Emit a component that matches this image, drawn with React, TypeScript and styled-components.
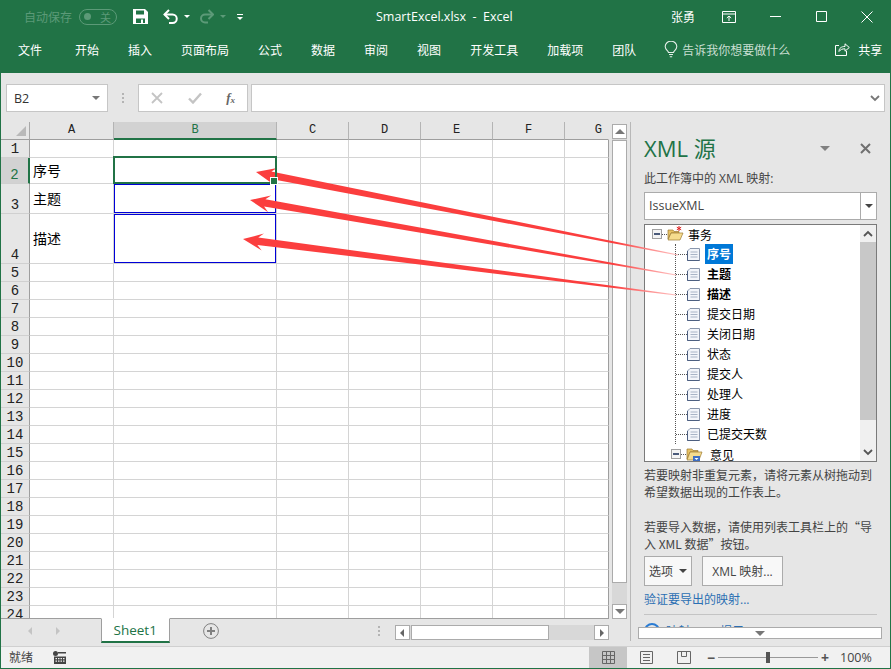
import React from 'react';
import styled, { createGlobalStyle } from 'styled-components';

const GREEN = '#217346';
const CJK = '"Noto Sans CJK SC", sans-serif';
const UI = '"Open Sans", "Noto Sans CJK SC", sans-serif';

const GlobalStyle = createGlobalStyle`
  html, body {
    margin: 0;
    padding: 0;
    background: #e6e6e6;
  }
  * {
    box-sizing: border-box;
  }
`;

const TABS = ['文件', '开始', '插入', '页面布局', '公式', '数据', '审阅', '视图', '开发工具', '加载项', '团队'];
const COLUMNS = ['A', 'B', 'C', 'D', 'E', 'F', 'G'];
const FIELDS = ['序号', '主题', '描述', '提交日期', '关闭日期', '状态', '提交人', '处理人', '进度', '已提交天数'];
const ROW_HEIGHTS = [18, 26, 30, 50];
const ROWS = Array.from({ length: 24 }, (_, i) => ({ id: i + 1, height: ROW_HEIGHTS[i] ?? 18 }));

const ARROWS = [
  { tip: [256, 172], tail: [678, 255] },
  { tip: [250, 200], tail: [676, 275] },
  { tip: [243, 239], tail: [676, 295] },
];

// tapered arrow: wide at the head, a hair at the tail
const arrowPoints = (tip: number[], tail: number[]) => {
  const len = Math.hypot(tail[0] - tip[0], tail[1] - tip[1]);
  const dx = (tail[0] - tip[0]) / len;
  const dy = (tail[1] - tip[1]) / len;
  const at = (along: number, side: number) =>
    `${(tip[0] + dx * along - dy * side).toFixed(1)},${(tip[1] + dy * along + dx * side).toFixed(1)}`;
  return [
    at(0, 0),
    at(20, -8),
    at(15, -3.5),
    at(len, -0.5),
    at(len, 0.5),
    at(15, 4),
    at(20, 9),
  ].join(' ');
};

const App: React.FC = () => {
  return (
    <Window>
      <GlobalStyle />
      <TitleBar>
        <AutoSave>自动保存</AutoSave>
        <Toggle>
          <ToggleDot />
          <ToggleText>关</ToggleText>
        </Toggle>
        <QuickIcon $left={16}>
          <svg width="15" height="15" viewBox="0 0 15 15">
            <path d="M0 0h12l3 3v12H0z" fill="#fff" />
            <path d="M3 1.5h8v4H3z" fill={GREEN} />
            <path d="M3 9.5h9V14H3z" fill={GREEN} />
            <path d="M8 10.5h2V14H8z" fill="#fff" />
          </svg>
        </QuickIcon>
        <QuickIcon $left={15}>
          <svg width="16" height="15" viewBox="0 0 16 15" fill="none" stroke="#fff" strokeWidth="2">
            <path d="M1.5 5.5h8a4.2 4.2 0 0 1 0 8.5H6" />
            <path d="M6 1 1.5 5.5 6 10" />
          </svg>
        </QuickIcon>
        <QuickCaret $left={5} />
        <QuickIcon $left={10}>
          <svg width="14" height="15" viewBox="0 0 14 15" fill="none" stroke="#5c9a78" strokeWidth="2">
            <path d="M13 5.5H5a3.8 3.8 0 0 0 0 8h3" />
            <path d="M8.5 1 13 5.5 8.5 10" />
          </svg>
        </QuickIcon>
        <QuickCaret $left={6} $dim />
        <Customize />
        <DocTitle>SmartExcel.xlsx&nbsp;&nbsp;-&nbsp;&nbsp;Excel</DocTitle>
        <UserName>张勇</UserName>
        <WinButton>
          <svg width="14" height="12" viewBox="0 0 14 12" fill="none" stroke="#fff">
            <path d="M.5 .5h13v11H.5zM.5 3h13M7 10V5M4.8 7 7 5l2.2 2" />
          </svg>
        </WinButton>
        <WinButton>
          <svg width="11" height="11" viewBox="0 0 11 11" stroke="#fff">
            <path d="M0 5.5h11" />
          </svg>
        </WinButton>
        <WinButton>
          <svg width="11" height="11" viewBox="0 0 11 11" fill="none" stroke="#fff">
            <path d="M.5 .5h10v10H.5z" />
          </svg>
        </WinButton>
        <WinButton>
          <svg width="12" height="12" viewBox="0 0 12 12" stroke="#fff">
            <path d="M.5 .5l11 11M11.5 .5l-11 11" />
          </svg>
        </WinButton>
      </TitleBar>

      <TabBar>
        {TABS.map((tab, i) => (
          <Tab key={tab} $first={i === 0}>
            {tab}
          </Tab>
        ))}
        <TellMe>
          <svg width="14" height="17" viewBox="0 0 14 17" fill="none" stroke="#e4eee8" strokeWidth="1.1">
            <path d="M4.5 11.5C4 9.5 1.2 8.500 1.2 5.500a5.800 5.300 0 0 1 11.600 0c0 3-2.800 4-3.300 6z" />
            <path d="M5 13.500h4M5.800 15.800h2.400" />
          </svg>
          <span>告诉我你想要做什么</span>
        </TellMe>
        <Share>
          <svg width="15" height="14" viewBox="0 0 15 14" fill="none" stroke="#fff">
            <path d="M4 3.500H.5v10h11V9" />
            <path d="M4 9.500c0-3.500 2.500-5 6-5V1.800l4.300 3.700-4.300 3.700V6.800c-3 0-4.500.8-6 2.700z" />
          </svg>
          <span>共享</span>
        </Share>
      </TabBar>

      <FormulaRow>
        <NameBox>
          <span>B2</span>
          <Caret $size={4} $color="#777" />
        </NameBox>
        <Grip />
        <FormulaButtons>
          <svg width="12" height="12" viewBox="0 0 12 12" stroke="#c4c4c4" strokeWidth="1.800">
            <path d="M1 1l10 10M11 1 1 11" />
          </svg>
          <svg width="14" height="12" viewBox="0 0 14 12" fill="none" stroke="#c4c4c4" strokeWidth="2.400">
            <path d="M1 6.500 5 10.500 13 1.500" />
          </svg>
          <FxLabel>
            f<sub>x</sub>
          </FxLabel>
        </FormulaButtons>
        <FormulaInput>
          <svg width="10" height="7" viewBox="0 0 10 7" fill="none" stroke="#777" strokeWidth="1.800">
            <path d="M1 1l4 4 4-4" />
          </svg>
        </FormulaInput>
      </FormulaRow>

      <Body>
        <SheetArea>
          <SheetMain>
            <Grid>
              <Corner />
              {COLUMNS.map((col) => (
                <ColHeader key={col} $active={col === 'B'} $last={col === 'G'}>
                  {col}
                </ColHeader>
              ))}
              {ROWS.map((row) => (
                <React.Fragment key={row.id}>
                  <RowHeader $active={row.id === 2} style={{ height: row.height }}>
                    {row.id}
                  </RowHeader>
                  {COLUMNS.map((col) => (
                    <Cell key={col} $last={col === 'G'}>
                      {col === 'A' && row.id === 2 && '序号'}
                      {col === 'A' && row.id === 3 && '主题'}
                      {col === 'A' && row.id === 4 && '描述'}
                      {col === 'B' && row.id === 2 && <Selection />}
                      {col === 'B' && (row.id === 3 || row.id === 4) && <MappedCell />}
                    </Cell>
                  ))}
                </React.Fragment>
              ))}
            </Grid>
            <VScroll>
              <ScrollButton>
                <Caret $size={5} $up $color="#777" />
              </ScrollButton>
              <VThumb />
              <ScrollButton>
                <Caret $size={5} $color="#777" />
              </ScrollButton>
            </VScroll>
          </SheetMain>

          <SheetBar>
            <SheetNav>
              <NavArrow $left />
              <NavArrow />
            </SheetNav>
            <SheetTab>Sheet1</SheetTab>
            <AddSheet>
              <svg width="16" height="16" viewBox="0 0 16 16" fill="none" stroke="#808080">
                <circle cx="8" cy="8" r="7.400" />
                <path d="M8 4v8M4 8h8" strokeWidth="2" />
              </svg>
            </AddSheet>
            <BarGrip />
            <HScroll>
              <HButton>
                <NavArrow $left $dark />
              </HButton>
              <HThumb />
              <HTrack />
              <HButton>
                <NavArrow $dark />
              </HButton>
            </HScroll>
          </SheetBar>
        </SheetArea>

        <TaskPane>
          <PaneBody>
            <PaneHead>
              <PaneTitle>XML 源</PaneTitle>
              <Caret $size={5} $color="#808080" />
              <svg width="11" height="11" viewBox="0 0 11 11" stroke="#707070" strokeWidth="2">
                <path d="M1 1l9 9M10 1l-9 9" />
              </svg>
            </PaneHead>
            <PaneLabel>此工作簿中的 XML 映射:</PaneLabel>
            <MapSelect>
              <MapName>IssueXML</MapName>
              <MapDrop>
                <Caret $size={4} $color="#444" />
              </MapDrop>
            </MapSelect>
            <Tree>
              <TreeList>
                <FolderRow>
                  <Expander />
                  <Stub />
                  <svg width="17" height="16" viewBox="0 0 17 16">
                    <path d="M1 13V4h5l1 1.500h5V7H4z" fill="#e8c264" stroke="#9c7a30" strokeWidth=".7" />
                    <path d="M1 14 4 7h12l-3 7z" fill="#f6dc8e" stroke="#9c7a30" strokeWidth=".7" />
                    <path d="M12 0v5M9.800 1.200l4.400 2.600M14.200 1.200 9.800 3.800" stroke="#e02020" strokeWidth="1" />
                  </svg>
                  <FolderLabel>事务</FolderLabel>
                </FolderRow>
                <TreeChildren>
                  {FIELDS.map((field, i) => (
                    <FieldRow key={field}>
                      <Stub />
                      <svg width="13" height="13" viewBox="0 0 13 13">
                        <path d="M3 .5h9.500v12H.5V3z" fill="#f2f5fa" stroke="#8a97ad" />
                        <path d="M.5 3v9.500h12" fill="none" stroke="#4d5f80" />
                        <path d="M3.500 4h7M3.500 6.500h7M3.500 9h7" stroke="#a8b4c6" />
                      </svg>
                      <FieldLabel $bold={i < 3} $selected={i === 0}>
                        {field}
                      </FieldLabel>
                    </FieldRow>
                  ))}
                </TreeChildren>
                <FolderRow $nested>
                  <Expander />
                  <Stub />
                  <svg width="17" height="16" viewBox="0 0 17 16">
                    <path d="M1 13V3h5l1 1.500h5V6H4z" fill="#e8c264" stroke="#9c7a30" strokeWidth=".7" />
                    <path d="M1 14 4 6h12l-3 8z" fill="#f6dc8e" stroke="#9c7a30" strokeWidth=".7" />
                    <path d="M7 10h7v6H7z" fill="#3f6fc4" />
                    <path d="M8.500 12h4l-2 2z" fill="#fff" />
                  </svg>
                  <FolderLabel $wide>意见</FolderLabel>
                </FolderRow>
              </TreeList>
              <TreeScroll>
                <TreeChevron>
                  <svg width="10" height="7" viewBox="0 0 10 7" fill="none" stroke="#555" strokeWidth="1.800">
                    <path d="M1 6l4-4 4 4" />
                  </svg>
                </TreeChevron>
                <TreeThumb />
                <TreeChevron>
                  <svg width="10" height="7" viewBox="0 0 10 7" fill="none" stroke="#555" strokeWidth="1.800">
                    <path d="M1 1l4 4 4-4" />
                  </svg>
                </TreeChevron>
              </TreeScroll>
            </Tree>
            <Hint>若要映射非重复元素，请将元素从树拖动到希望数据出现的工作表上。</Hint>
            <Hint $gap>若要导入数据，请使用列表工具栏上的“导入 XML 数据”按钮。</Hint>
            <PaneButtons>
              <PaneButton>
                选项
                <Caret $size={4} $color="#444" />
              </PaneButton>
              <PaneButton $wide>XML 映射...</PaneButton>
            </PaneButtons>
            <PaneLink>验证要导出的映射...</PaneLink>
            <PaneDivider />
            <HelpRow>
              <svg width="16" height="16" viewBox="0 0 16 16" fill="none" stroke="#2b7cd3" strokeWidth="2">
                <circle cx="8" cy="8" r="7" />
              </svg>
              <HelpText>映射 XML 提示</HelpText>
            </HelpRow>
          </PaneBody>
          <PaneScroller>
            <Caret $size={5} $color="#777" />
          </PaneScroller>
        </TaskPane>
      </Body>

      <StatusBar>
        <StatusText>就绪</StatusText>
        <MacroIcon>
          <svg width="13" height="13" viewBox="0 0 13 13" fill="#444">
            <circle cx="2.500" cy="2.500" r="2.500" />
            <path d="M5 1h8v1.500H5zM1 5.500h12V13H1zM2.500 7v1.200h1.500V7zm2.500 0v1.200h1.500V7zm2.500 0v1.200H9V7zm2.500 0v1.200h1.500V7zM2.500 9.500v1.200h1.500V9.500zm2.500 0v1.200h1.500V9.500zm2.500 0v1.200H9V9.500zm2.500 0v1.200h1.500V9.500z" fillRule="evenodd" />
          </svg>
        </MacroIcon>
        <ViewButton $active>
          <svg width="13" height="13" viewBox="0 0 13 13" fill="none" stroke="#666">
            <path d="M.5 .5h12v12H.5zM4.500 .5v12M8.500 .5v12M.5 4.500h12M.5 8.500h12" />
          </svg>
        </ViewButton>
        <ViewButton>
          <svg width="13" height="13" viewBox="0 0 13 13" fill="none" stroke="#666">
            <path d="M.5 .5h12v12H.5zM3 3.500h7M3 6.500h7M3 9.500h7" />
          </svg>
        </ViewButton>
        <ViewButton>
          <svg width="14" height="13" viewBox="0 0 14 13" fill="none" stroke="#666">
            <path d="M.5 .5h13v12H.5zM4.500 .5v5h5v-5" />
          </svg>
        </ViewButton>
        <Zoom>
          <ZoomSign>−</ZoomSign>
          <ZoomTrack>
            <ZoomThumb />
          </ZoomTrack>
          <ZoomSign>+</ZoomSign>
          <ZoomValue>100%</ZoomValue>
        </Zoom>
      </StatusBar>

      <ArrowLayer width="891" height="669" viewBox="0 0 891 669">
        <defs>
          {ARROWS.map((a, i) => (
            <linearGradient
              key={i}
              id={`fade${i}`}
              gradientUnits="userSpaceOnUse"
              x1={a.tip[0]}
              y1={a.tip[1]}
              x2={a.tail[0]}
              y2={a.tail[1]}
            >
              <stop offset="0.85" stopColor="#fb3e3e" />
              <stop offset="1" stopColor="#ffc4c4" />
            </linearGradient>
          ))}
        </defs>
        {ARROWS.map((a, i) => (
          <polygon key={i} points={arrowPoints(a.tip, a.tail)} fill={`url(#fade${i})`} />
        ))}
      </ArrowLayer>
    </Window>
  );
};

const Window = styled.div`
  position: relative;
  display: flex;
  flex-direction: column;
  width: 891px;
  height: 669px;
  overflow: hidden;
  background: #e6e6e6;
  border: solid ${GREEN};
  border-width: 0 1px 1px 1px;
  font-family: ${UI};
`;

const TitleBar = styled.div`
  display: flex;
  align-items: center;
  height: 33px;
  margin: 0 -1px;
  padding-left: 24px;
  background: ${GREEN};
  color: #fff;
  flex-shrink: 0;
`;

const AutoSave = styled.span`
  font: 12px ${CJK};
  color: #5c9a78;
`;

const Toggle = styled.div`
  display: flex;
  align-items: center;
  justify-content: space-between;
  width: 38px;
  height: 16px;
  margin-left: 7px;
  padding: 0 5px 0 4px;
  border: 1px solid #5c9a78;
  border-radius: 8px;
`;

const ToggleDot = styled.span`
  width: 7px;
  height: 7px;
  border-radius: 50%;
  background: #5c9a78;
`;

const ToggleText = styled.span`
  font: 11px ${CJK};
  color: #5c9a78;
`;

const QuickIcon = styled.span<{ $left: number }>`
  display: flex;
  margin-left: ${(p) => p.$left}px;
`;

const QuickCaret = styled.span<{ $left: number; $dim?: boolean }>`
  width: 0;
  height: 0;
  margin-left: ${(p) => p.$left}px;
  border: 3px solid transparent;
  border-bottom-width: 0;
  border-top: 3px solid ${(p) => (p.$dim ? '#5c9a78' : '#fff')};
`;

const Customize = styled.span`
  position: relative;
  width: 6px;
  height: 6px;
  margin-left: 11px;
  border-top: 1px solid #fff;
  &::after {
    content: '';
    position: absolute;
    left: 0;
    top: 2px;
    border: 3px solid transparent;
    border-bottom-width: 0;
    border-top: 3px solid #fff;
  }
`;

const DocTitle = styled.span`
  position: absolute;
  left: 375px;
  top: 8px;
  font-size: 12.500px;
  line-height: 17px;
  white-space: nowrap;
`;

const UserName = styled.span`
  margin-left: auto;
  margin-right: 11px;
  font: 12px ${CJK};
`;

const WinButton = styled.span`
  display: flex;
  align-items: center;
  justify-content: center;
  width: 46px;
  height: 33px;
  &:last-child {
    margin-right: 1px;
  }
`;

const TabBar = styled.div`
  display: flex;
  align-items: center;
  gap: 29px;
  height: 40px;
  margin: 0 -1px;
  padding: 0 0 8px 18px;
  background: ${GREEN};
  flex-shrink: 0;
`;

const Tab = styled.span<{ $first?: boolean }>`
  margin-right: ${(p) => (p.$first ? 4 : 0)}px;
  font: 12px ${CJK};
  color: #fff;
`;

const TellMe = styled.span`
  display: flex;
  align-items: center;
  gap: 4px;
  margin-left: -1px;
  font: 12px ${CJK};
  color: #c9dfd2;
`;

const Share = styled.span`
  display: flex;
  align-items: center;
  gap: 8px;
  margin-left: 16px;
  font: 12px ${CJK};
  color: #fff;
`;

const FormulaRow = styled.div`
  display: flex;
  align-items: flex-start;
  height: 49px;
  padding: 11px 5px 0 5px;
  flex-shrink: 0;
`;

const FieldBox = styled.div`
  display: flex;
  align-items: center;
  height: 28px;
  background: #fff;
  border: 1px solid #c6c6c6;
`;

const NameBox = styled(FieldBox)`
  justify-content: space-between;
  width: 102px;
  padding: 0 7px;
  font-size: 12.500px;
  color: #333;
`;

const Grip = styled.span`
  width: 2px;
  height: 10px;
  margin: 9px 14px 0 14px;
  background: repeating-linear-gradient(#b4b4b4 0 2px, transparent 2px 4px);
`;

const FormulaButtons = styled(FieldBox)`
  justify-content: space-between;
  width: 110px;
  padding: 0 12px;
`;

const FxLabel = styled.span`
  font: italic bold 13px "Liberation Serif", serif;
  color: #666;
  sub {
    font-size: 9px;
    vertical-align: -1px;
  }
`;

const FormulaInput = styled(FieldBox)`
  justify-content: flex-end;
  width: 634px;
  margin-left: 3px;
  padding-right: 4px;
`;

const Caret = styled.span<{ $size: number; $color: string; $up?: boolean }>`
  display: inline-block;
  width: 0;
  height: 0;
  border-left: ${(p) => p.$size}px solid transparent;
  border-right: ${(p) => p.$size}px solid transparent;
  ${(p) =>
    p.$up
      ? `border-bottom: ${p.$size}px solid ${p.$color};`
      : `border-top: ${p.$size}px solid ${p.$color};`}
`;

const Body = styled.div`
  display: flex;
  height: 524px;
  flex-shrink: 0;
`;

const SheetArea = styled.div`
  display: flex;
  flex-direction: column;
  width: 629px;
  flex-shrink: 0;
`;

const SheetMain = styled.div`
  display: flex;
  height: 496px;
`;

const Grid = styled.div`
  display: grid;
  grid-template-columns: 29px 84px 163px 72px 72px 72px 72px 44px;
  grid-auto-rows: min-content;
  width: 608px;
  height: 496px;
  overflow: hidden;
  background: #fff;
  flex-shrink: 0;
  font-family: "Liberation Mono", monospace;
`;

const Corner = styled.div`
  position: relative;
  height: 18px;
  background: #e6e6e6;
  border-right: 1px solid #a8a8a8;
  border-bottom: 1px solid #9e9e9e;
  &::after {
    content: '';
    position: absolute;
    right: 3px;
    bottom: 3px;
    border-style: solid;
    border-width: 0 0 10px 10px;
    border-color: transparent transparent #b9b9b9 transparent;
  }
`;

const ColHeader = styled.div<{ $active?: boolean; $last?: boolean }>`
  height: 18px;
  padding-right: ${(p) => (p.$last ? 6 : 0)}px;
  text-align: ${(p) => (p.$last ? 'right' : 'center')};
  font-size: 12px;
  line-height: 17px;
  color: ${(p) => (p.$active ? GREEN : '#222')};
  background: ${(p) => (p.$active ? '#d2d2d2' : '#e6e6e6')};
  border-right: 1px solid ${(p) => (p.$last ? '#e6e6e6' : '#b4b4b4')};
  border-bottom: ${(p) => (p.$active ? `2px solid ${GREEN}` : '1px solid #9e9e9e')};
`;

const RowHeader = styled.div<{ $active?: boolean }>`
  display: flex;
  align-items: flex-end;
  justify-content: center;
  font-size: 14px;
  line-height: 16px;
  color: ${(p) => (p.$active ? GREEN : '#222')};
  background: ${(p) => (p.$active ? '#d2d2d2' : '#e6e6e6')};
  border-bottom: 1px solid #d0d0d0;
  border-right: ${(p) => (p.$active ? `2px solid ${GREEN}` : '1px solid #9e9e9e')};
`;

const Cell = styled.div<{ $last?: boolean }>`
  position: relative;
  display: flex;
  align-items: center;
  padding: 0 0 2px 3px;
  font: 14px ${CJK};
  color: #000;
  border-bottom: 1px solid #d4d4d4;
  border-right: 1px solid ${(p) => (p.$last ? '#9e9e9e' : '#d4d4d4')};
`;

const Selection = styled.div`
  position: absolute;
  z-index: 2;
  inset: -2px -1px -1px -1px;
  border: 2px solid ${GREEN};
  &::after {
    content: '';
    position: absolute;
    right: -3px;
    bottom: -3px;
    width: 6px;
    height: 6px;
    background: ${GREEN};
    border: 1px solid #fff;
  }
`;

const MappedCell = styled.div`
  position: absolute;
  inset: 0 0 0 0;
  border: 1px solid #0000d8;
`;

const VScroll = styled.div`
  display: flex;
  flex-direction: column;
  width: 15px;
  height: 495px;
  margin: 2px 0 0 3px;
  background: #d8d8d8;
`;

const ScrollButton = styled.div`
  display: flex;
  align-items: center;
  justify-content: center;
  width: 15px;
  height: 15px;
  background: #fff;
  border: 1px solid #ababab;
  flex-shrink: 0;
`;

const VThumb = styled.div`
  width: 15px;
  height: 443px;
  margin: 1px 0 auto;
  background: #fff;
  border: 1px solid #ababab;
`;

const SheetBar = styled.div`
  display: flex;
  align-items: flex-start;
  height: 28px;
  border-top: 1px solid #9e9e9e;
  margin-right: 21px;
`;

const SheetNav = styled.div`
  display: flex;
  align-items: center;
  gap: 24px;
  width: 100px;
  height: 23px;
  padding-left: 27px;
`;

const NavArrow = styled.span<{ $left?: boolean; $dark?: boolean }>`
  width: 0;
  height: 0;
  border-top: 4px solid transparent;
  border-bottom: 4px solid transparent;
  ${(p) => {
    const fill = p.$dark ? '#666' : '#c4c4c4';
    return p.$left ? `border-right: 4px solid ${fill};` : `border-left: 4px solid ${fill};`;
  }}
`;

const SheetTab = styled.div`
  width: 69px;
  height: 25px;
  margin-top: -1px;
  text-align: center;
  font-size: 13.500px;
  line-height: 23px;
  color: ${GREEN};
  background: #fff;
  border: solid #9e9e9e;
  border-width: 1px 1px 0 1px;
  border-top-color: #fff;
  border-bottom: 2px solid ${GREEN};
`;

const AddSheet = styled.div`
  display: flex;
  margin: 4px 0 0 33px;
`;

const BarGrip = styled(Grip)`
  margin: 7px 15px 0 159px;
`;

const HScroll = styled.div`
  display: flex;
  width: 215px;
  height: 15px;
  margin-top: 6px;
  background: #d8d8d8;
`;

const HButton = styled(ScrollButton)`
  flex-shrink: 0;
`;

const HThumb = styled.div`
  width: 138px;
  margin-left: 1px;
  background: #fff;
  border: 1px solid #ababab;
`;

const HTrack = styled.div`
  flex: 1;
`;

const TaskPane = styled.div`
  display: flex;
  flex-direction: column;
  width: 260px;
  border-left: 1px solid #b8b8b8;
  margin-bottom: 5px;
`;

const PaneBody = styled.div`
  height: 505px;
  padding: 0 13px 0 13px;
  overflow: hidden;
  flex-shrink: 0;
`;

const PaneHead = styled.div`
  display: flex;
  align-items: center;
  gap: 30px;
  height: 48px;
  padding: 4px 6px 0 0;
`;

const PaneTitle = styled.div`
  flex: 1;
  font-size: 22px;
  line-height: 30px;
  color: ${GREEN};
`;

const PaneLabel = styled.div`
  font-size: 12px;
  line-height: 18px;
  color: #444;
`;

const MapSelect = styled.div`
  display: flex;
  height: 28px;
  margin-top: 4px;
  background: #fff;
  border: 1px solid #ababab;
`;

const MapName = styled.div`
  flex: 1;
  padding-left: 4px;
  font-size: 12.500px;
  line-height: 26px;
  color: #444;
`;

const MapDrop = styled.div`
  display: flex;
  align-items: center;
  justify-content: center;
  width: 16px;
  border-left: 1px solid #ababab;
`;

const Tree = styled.div`
  display: flex;
  height: 238px;
  margin-top: 4px;
  background: #fff;
  border: 1px solid #7a7a7a;
`;

const TreeList = styled.div`
  flex: 1;
  margin-top: -1px;
  overflow: hidden;
  font: 12px ${CJK};
  color: #000;
`;

const FolderRow = styled.div<{ $nested?: boolean }>`
  display: flex;
  align-items: center;
  height: 20px;
  padding-left: ${(p) => (p.$nested ? 26 : 7)}px;
`;

const Expander = styled.span`
  position: relative;
  width: 10px;
  height: 10px;
  background: #f4f4f4;
  border: 1px solid #a0a0a0;
  flex-shrink: 0;
  &::after {
    content: '';
    position: absolute;
    left: 1px;
    right: 1px;
    top: 3px;
    height: 2px;
    background: #4a5a7a;
  }
`;

const Stub = styled.span`
  width: 11px;
  height: 0;
  border-top: 1px dotted #555;
  flex-shrink: 0;
  ${Expander} + & {
    width: 5px;
  }
`;

const FolderLabel = styled.span<{ $wide?: boolean }>`
  margin-left: ${(p) => (p.$wide ? 7 : 4)}px;
`;

const TreeChildren = styled.div`
  margin-left: 30px;
  border-left: 1px dotted #555;
`;

const FieldRow = styled.div`
  display: flex;
  align-items: center;
  height: 20px;
`;

const FieldLabel = styled.span<{ $bold?: boolean; $selected?: boolean }>`
  margin-left: 5px;
  padding: 0 2px;
  line-height: 20px;
  font-weight: ${(p) => (p.$bold ? 700 : 400)};
  color: ${(p) => (p.$selected ? '#fff' : '#000')};
  background: ${(p) => (p.$selected ? '#0078d7' : 'transparent')};
`;

const TreeScroll = styled.div`
  display: flex;
  flex-direction: column;
  width: 16px;
  background: #f0f0f0;
`;

const TreeChevron = styled.div`
  display: flex;
  align-items: center;
  justify-content: center;
  height: 17px;
  flex-shrink: 0;
`;

const TreeThumb = styled.div`
  height: 178px;
  margin-bottom: auto;
  background: #c8c8c8;
`;

const Hint = styled.div<{ $gap?: boolean }>`
  margin-top: ${(p) => (p.$gap ? 18 : 4)}px;
  font: 12px/17px ${CJK};
  color: #444;
`;

const PaneButtons = styled.div`
  display: flex;
  gap: 10px;
  margin-top: 4px;
`;

const PaneButton = styled.div<{ $wide?: boolean }>`
  display: flex;
  align-items: center;
  justify-content: center;
  gap: 6px;
  width: ${(p) => (p.$wide ? 81 : 48)}px;
  height: 30px;
  font-size: 12px;
  color: #444;
  background: #f8f8f8;
  border: 1px solid #ababab;
`;

const PaneLink = styled.div`
  margin-top: 5px;
  font-size: 12px;
  line-height: 17px;
  color: #2b6fb3;
`;

const PaneDivider = styled.div`
  height: 1px;
  margin-top: 6px;
  background: #c4c4c4;
`;

const HelpRow = styled.div`
  display: flex;
  align-items: center;
  gap: 6px;
  margin-top: 7px;
`;

const HelpText = styled.span`
  font-size: 12px;
  color: #2b6fb3;
`;

const PaneScroller = styled.div`
  display: flex;
  align-items: center;
  justify-content: center;
  width: 244px;
  height: 12px;
  margin-left: 7px;
  background: #fff;
  border: 1px solid #ababab;
`;

const StatusBar = styled.div`
  display: flex;
  align-items: stretch;
  height: 22px;
  background: #f1f1f1;
  border-top: 1px solid #d0d0d0;
  flex-shrink: 0;
`;

const StatusText = styled.span`
  margin-left: 8px;
  font: 12px/20px ${CJK};
  color: #444;
`;

const MacroIcon = styled.span`
  display: flex;
  align-items: center;
  margin: 0 auto 0 20px;
`;

const ViewButton = styled.span<{ $active?: boolean }>`
  display: flex;
  align-items: center;
  justify-content: center;
  width: 38px;
  background: ${(p) => (p.$active ? '#c6c6c6' : 'transparent')};
`;

const Zoom = styled.div`
  display: flex;
  align-items: center;
  width: 187px;
  padding-left: 3px;
`;

const ZoomSign = styled.span`
  width: 10px;
  text-align: center;
  font-size: 14px;
  font-weight: 700;
  line-height: 20px;
  color: #555;
`;

const ZoomTrack = styled.span`
  position: relative;
  width: 100px;
  height: 1px;
  margin: 0 2px;
  background: #999;
`;

const ZoomThumb = styled.span`
  position: absolute;
  left: 48px;
  top: -5px;
  width: 4px;
  height: 11px;
  background: #555;
`;

const ZoomValue = styled.span`
  margin-left: 10px;
  font-size: 12.500px;
  color: #444;
`;

const ArrowLayer = styled.svg`
  position: absolute;
  left: -1px;
  top: 0;
  pointer-events: none;
`;

export default App;
